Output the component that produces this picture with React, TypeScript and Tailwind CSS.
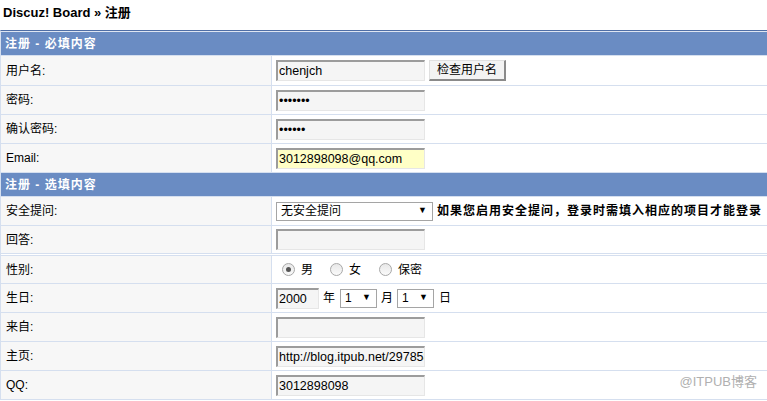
import type { ReactNode } from "react";

const font = { fontFamily: '"Liberation Sans", "Noto Sans CJK SC", sans-serif' };

function Row({
  label,
  children,
  h = "h-[29px]",
  border = "border-b",
}: {
  label: ReactNode;
  children?: ReactNode;
  h?: string;
  border?: string;
}) {
  return (
    <div className={`flex ${h} ${border} border-[#d5dfef]`}>
      <div className="w-[271px] shrink-0 bg-[#f7f7f7] border-r border-[#d5dfef] pl-[5px] flex items-center">
        {label}
      </div>
      <div className="flex items-center pl-[4px] flex-1">{children}</div>
    </div>
  );
}

function Header({ title }: { title: string }) {
  return (
    <div className="h-[24px] bg-[#6a8cc3] border-b border-[#d5dfef] text-white font-bold tracking-[1px] pl-[4px] flex items-center">
      {title}
    </div>
  );
}

function Input({ value = "", w = "w-[149px]", bg = "bg-[#f5f5f5]" }: { value?: string; w?: string; bg?: string }) {
  return (
    <input
      readOnly
      value={value}
      className={`${w} h-[21px] ${bg} border-t-2 border-l-2 border-[#9c9c9c] border-r border-b border-r-[#e6e6e6] border-b-[#e6e6e6] pl-[1px] text-[12.5px] outline-none`}
      style={font}
    />
  );
}

function Select({ value, w }: { value: string; w: string }) {
  return (
    <div className={`${w} h-[19px] bg-white border border-[#a5a5a5] flex items-center justify-between pl-[4px] pr-[5px] text-[12px]`}>
      <span>{value}</span>
      <span className="text-[9px]">▼</span>
    </div>
  );
}

function Radio({ checked }: { checked?: boolean }) {
  return (
    <div className="w-[13px] h-[13px] rounded-full border border-[#a8a8a8] bg-gradient-to-b from-[#e8e8e8] to-[#fafafa] flex items-center justify-center">
      {checked && <div className="w-[5px] h-[5px] rounded-full bg-[#555]" />}
    </div>
  );
}

export default function App() {
  return (
    <div className="relative w-[767px] h-[401px] bg-white text-[12px] text-black overflow-hidden" style={font}>
      <div className="h-[30px] pl-[3px] pt-[3px] font-bold text-[13px]">Discuz! Board » 注册</div>
      <div className="border-t border-[#4f6ea6] border-l border-l-[#d5dfef]">
        <div className="border-t border-[#dfe6f2]">
          <Header title="注册 - 必填内容" />
        </div>
        <Row label="用户名:" h="h-[30px]">
          <Input value="chenjch" />
          <div className="ml-[4px] h-[21px] w-[77px] bg-[#f3f3f3] border-t border-l border-[#e0e0e0] border-r-2 border-b-2 border-r-[#8a8a8a] border-b-[#8a8a8a] flex items-center justify-center text-[12px]">
            检查用户名
          </div>
        </Row>
        <Row label="密码:">
          <Input value="•••••••" />
        </Row>
        <Row label="确认密码:">
          <Input value="••••••" />
        </Row>
        <Row label="Email:">
          <Input value="3012898098@qq.com" bg="bg-[#ffffc6]" />
        </Row>
        <Header title="注册 - 选填内容" />
        <Row label="安全提问:">
          <Select value="无安全提问" w="w-[157px]" />
          <span className="ml-[4px] font-bold tracking-[1px] whitespace-nowrap">
            如果您启用安全提问，登录时需填入相应的项目才能登录
          </span>
        </Row>
        <Row label="回答:" h="h-[30px]" border="border-b-[3px] border-double">
          <Input />
        </Row>
        <Row label="性别:" h="h-[28px]">
          <div className="flex items-center pl-[6px]">
            <Radio checked />
            <span className="ml-[6px]">男</span>
            <div className="ml-[17px]">
              <Radio />
            </div>
            <span className="ml-[6px]">女</span>
            <div className="ml-[18px]">
              <Radio />
            </div>
            <span className="ml-[6px]">保密</span>
          </div>
        </Row>
        <Row label="生日:">
          <Input value="2000" w="w-[43px]" />
          <span className="ml-[4px]">年</span>
          <div className="ml-[5px]">
            <Select value="1" w="w-[37px]" />
          </div>
          <span className="ml-[4px]">月</span>
          <div className="ml-[4px]">
            <Select value="1" w="w-[37px]" />
          </div>
          <span className="ml-[5px]">日</span>
        </Row>
        <Row label="来自:">
          <Input />
        </Row>
        <Row label="主页:">
          <Input value="http://blog.itpub.net/29785807/" />
        </Row>
        <Row label="QQ:">
          <Input value="3012898098" />
        </Row>
      </div>
      <div className="absolute right-[10px] bottom-[10px] text-[13px] text-[#b0b0b0]">@ITPUB博客</div>
    </div>
  );
}
